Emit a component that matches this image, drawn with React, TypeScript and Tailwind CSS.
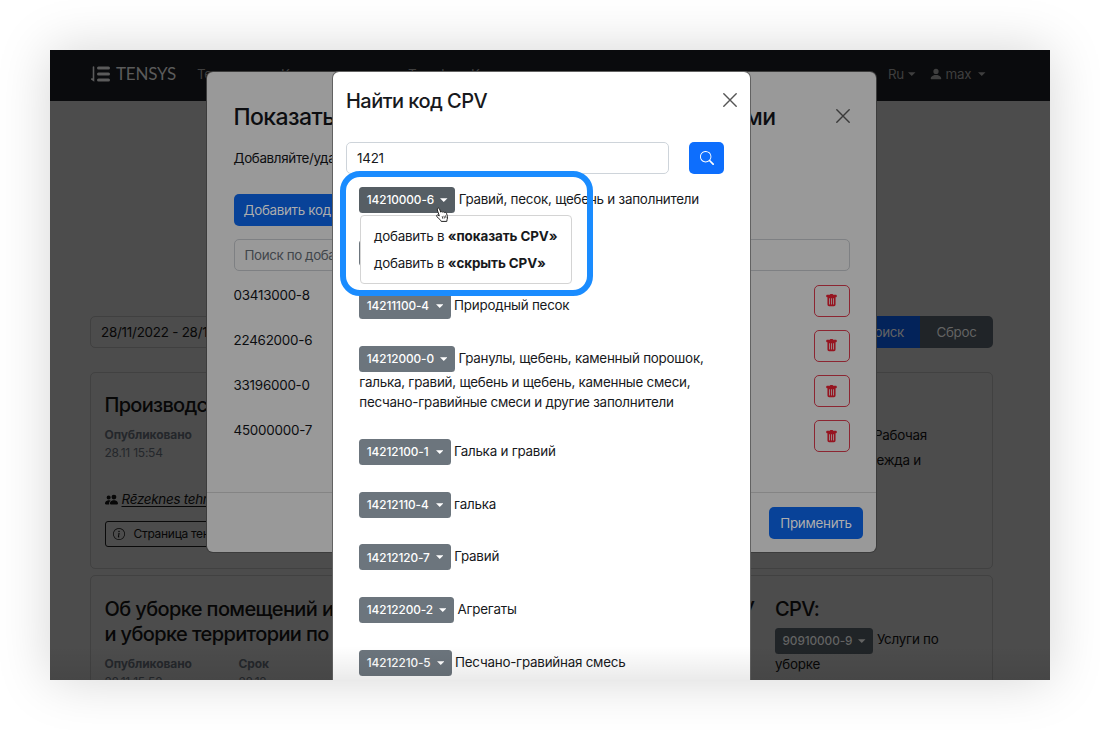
import React from "react";
import { BsInfoCircle, BsPeopleFill, BsPersonFill, BsSearch, BsTrashFill } from "react-icons/bs";

type CpvItem = { code: string; lines: string[]; active?: boolean };

const results: CpvItem[] = [
  { code: "14210000-6", lines: ["Гравий, песок, щебень и заполнители"], active: true },
  { code: "", lines: [""] },
  { code: "14211100-4", lines: ["Природный песок"] },
  {
    code: "14212000-0",
    lines: [
      "Гранулы, щебень, каменный порошок,",
      "галька, гравий, щебень и щебень, каменные смеси,",
      "песчано-гравийные смеси и другие заполнители",
    ],
  },
  { code: "14212100-1", lines: ["Галька и гравий"] },
  { code: "14212110-4", lines: ["галька"] },
  { code: "14212120-7", lines: ["Гравий"] },
  { code: "14212200-2", lines: ["Агрегаты"] },
  { code: "14212210-5", lines: ["Песчано-гравийная смесь"] },
];

const savedCodes = ["03413000-8", "22462000-6", "33196000-0", "45000000-7"];

function Caret({ className = "" }: { className?: string }) {
  return (
    <svg viewBox="0 0 8 4" className={`h-1 w-[7.5px] shrink-0 ${className}`} fill="currentColor">
      <path d="M0 0h8L4 4z" />
    </svg>
  );
}

function CloseIcon({ className = "" }: { className?: string }) {
  return (
    <svg viewBox="0 0 14 14" className={`size-3.5 shrink-0 ${className}`} fill="none" stroke="currentColor" strokeWidth="1.4" strokeLinecap="round">
      <path d="M.8.8l12.4 12.4M13.2.8L.8 13.2" />
    </svg>
  );
}

function CodeBadge({ code, className }: { code: string; className: string }) {
  return (
    <span className={`flex h-[26px] min-w-[91.3px] shrink-0 items-center justify-between gap-[6px] rounded-[3.5px] px-[7.5px] text-[11.8px] font-medium tracking-[-0.007em] ${className}`}>
      <span className="pt-[2px]">{code}</span>
      <Caret />
    </span>
  );
}

function Logo() {
  return (
    <div className="flex items-center text-[#5b5b5b]">
      <svg viewBox="0 0 19 16" className="h-4 w-[19px]" fill="none" stroke="currentColor" strokeLinecap="round">
        <path d="M2.5 1v13.2L.8 13" strokeWidth="1.6" />
        <path d="M7.5 2.1h10M7.5 8h10M7.5 13.9h10" strokeWidth="3" />
      </svg>
      <span className="ml-[6px] font-['Lato',sans-serif] text-[17px] leading-none">TENSYS</span>
    </div>
  );
}

function Navbar() {
  return (
    <header className="flex h-[51px] shrink-0 items-center bg-[#0a0b0d] pb-[4px] pl-[41px] text-[13.4px] tracking-[-0.017em] text-[#3f3f3f]">
      <Logo />
      <nav className="ml-[21px] flex pt-[2px]">
        <span className="w-[84px]">Тендеры</span>
        <span className="w-[127px]">Компании</span>
        <span className="w-[63px]">Тарифы</span>
        <span className="w-[417px]">Контакты</span>
      </nav>
      <span className="flex items-center gap-[4px] pt-[2px]">
        Ru <Caret />
      </span>
      <span className="ml-[14px] flex items-center pt-[2px]">
        <BsPersonFill className="-ml-px size-[14px]" />
        <span className="ml-[3px] mr-[7px]">max</span>
        <Caret />
      </span>
    </header>
  );
}

function DatePair({ label, value }: { label: string; value: string }) {
  return (
    <div className="w-[134px] text-[12px] leading-[18px] text-[#24272b]">
      <div className="font-bold tracking-[-0.008em]">{label}</div>
      <div>{value}</div>
    </div>
  );
}

function TenderPage() {
  return (
    <div className="flex h-[630px] flex-col bg-[#4c4c4c]">
      <Navbar />
      <main className="mx-10 w-[903px] pt-[215px] text-[13.4px] tracking-[-0.017em] text-[#070707]">
        <div className="flex h-8">
          <div className="flex-1 rounded-l-[5px] border border-[#404040] px-[10px] leading-[30px]">28/11/2022 - 28/12</div>
          <div className="w-[90px] bg-[#03235a] pr-4 text-right leading-8 tracking-[-0.025em] text-[#636363]">Поиск</div>
          <div className="w-[73px] rounded-r-[5px] bg-[#202428] text-center leading-8 tracking-[-0.025em] text-[#636363]">Сброс</div>
        </div>

        <section className="mt-[24px] flex h-[197px] justify-between rounded-[5px] border border-[#414141] pl-[13.5px] pr-[65px]">
          <div>
            <h2 className="mt-[20px] text-[20px] font-medium leading-[25px] tracking-[-0.035em]">Производство</h2>
            <div className="mt-[8px]">
              <DatePair label="Опубликовано" value="28.11 15:54" />
            </div>
            <div className="mt-[27px] flex h-5 items-center gap-[4px]">
              <BsPeopleFill className="size-[13px]" />
              <span className="italic tracking-[-0.02em] underline underline-offset-2">Rēzeknes tehn</span>
            </div>
            <div className="mt-[12px] flex h-[26px] w-[150px] items-center gap-[9px] rounded-[3px] border border-[#0a0a0a] pl-[7px] text-[12px] tracking-[-0.025em]">
              <BsInfoCircle className="size-[12px]" />
              Страница тен
            </div>
          </div>
          <div className="pt-[50px] text-right leading-[25px]">
            <div className="tracking-[-0.02em]">Рабочая</div>
            <div className="pr-[6px]">одежда и</div>
          </div>
        </section>

        <section className="mt-[6px] flex h-[140px] rounded-[5px] border border-[#414141] pl-[13.5px] pt-[21px]">
          <div className="w-[670.5px]">
            <h2 className="text-[20px] font-medium leading-[25px] tracking-[-0.031em]">
              <span className="flex w-[650px] justify-between">
                <span>Об уборке помещений и</span>
                <span>У</span>
              </span>
              и уборке территории по
            </h2>
            <div className="mt-[8px] flex">
              <DatePair label="Опубликовано" value="28.11 15:52" />
              <DatePair label="Срок" value="28.12" />
            </div>
          </div>
          <div>
            <h2 className="text-[20px] font-medium leading-[25px] tracking-[-0.03em]">CPV:</h2>
            <div className="mt-[6px] flex items-center gap-[3.5px]">
              <CodeBadge code="90910000-9" className="bg-[#202427] text-[#636363]" />
              <span className="pb-[3px]">Услуги по</span>
            </div>
            <div className="leading-5">уборке</div>
          </div>
        </section>
      </main>
    </div>
  );
}

function CodesDialog() {
  return (
    <div className="absolute left-[157px] top-[22px] flex h-[480px] w-[669px] flex-col rounded-[6px] bg-[#999999] text-[13.4px] tracking-[-0.017em] text-[#0c0d10] shadow-[0_0_0_1px_#3c3c3c]">
      <div className="flex items-center justify-between pl-[26.5px] pr-[26px] pt-[30px]">
        <h1 className="flex w-[542px] justify-between text-[23px] font-medium leading-[30px] tracking-[-0.025em]">
          <span>Показать</span>
          <span>ми</span>
        </h1>
        <CloseIcon className="-mt-[3px] text-[#3a3a3a]" />
      </div>
      <div className="px-[26.5px]">
        <p className="mt-[16px] leading-5 tracking-[-0.025em]">Добавляйте/удал</p>
        <div className="mt-[26px] h-8 w-[120px] rounded-[5px] bg-[#084298] pl-[10px] leading-8 tracking-[-0.023em] text-[#adadad]">Добавить код</div>
        <div className="mt-[13px] h-8 w-[616px] rounded-[5px] border border-[#7e8083] px-[10px] leading-[30px] tracking-[-0.03em] text-[#41464b]">Поиск по добавленн</div>
        <ul className="mt-[13.5px]">
          {savedCodes.map((code) => (
            <li key={code} className="flex h-[45.3px] w-[616px] justify-between">
              <span className="leading-[21.5px]">{code}</span>
              <span className="flex h-8 w-9 items-center justify-center rounded-[5px] border border-[#8c2632] text-[#961420]">
                <BsTrashFill className="size-[13px]" />
              </span>
            </li>
          ))}
        </ul>
      </div>
      <div className="mt-auto flex h-[60px] justify-end border-t border-[#848484] pr-[13px] pt-[14px]">
        <span className="h-8 w-[94px] rounded-[5px] bg-[#084298] text-center leading-8 tracking-[-0.02em] text-[#adadad]">Применить</span>
      </div>
    </div>
  );
}

function SearchDialog() {
  return (
    <div className="absolute left-[283px] top-[22px] h-[608px] w-[417px] overflow-hidden rounded-t-[6px] bg-white text-[13.4px] tracking-[-0.0175em] text-[#17191c]">
      <div className="flex items-center justify-between pl-[13px] pr-[13px] pt-[14px]">
        <h1 className="text-[20px] font-medium leading-[30px] tracking-[-0.027em]">Найти код CPV</h1>
        <CloseIcon className="-mt-[3px] text-[#555]" />
      </div>
      <div className="mt-[26px] flex gap-5 pl-[13px]">
        <div className="h-8 w-[323px] rounded-[5px] border border-[#ced4da] px-[10px] leading-[30px]">1421</div>
        <div className="flex h-8 w-[35px] items-center justify-center rounded-[5px] bg-[#0d6efd] text-white">
          <BsSearch className="size-[14px]" />
        </div>
      </div>
      <ul className="mt-[13.2px] pl-[26.3px]">
        {results.map((item) => (
          <li key={item.code} className="mb-[26.8px]">
            <div className="flex items-center gap-[3.5px]">
              <CodeBadge code={item.code} className={item.active ? "bg-[#565e64] text-white" : "bg-[#6c757d] text-white"} />
              <span className="whitespace-nowrap pb-[2px]">{item.lines[0]}</span>
            </div>
            {item.lines.slice(1).map((line) => (
              <div key={line} className="whitespace-nowrap leading-[20.2px]">{line}</div>
            ))}
          </li>
        ))}
      </ul>
    </div>
  );
}

function ActionMenu() {
  return (
    <div className="absolute left-[310px] top-[165px] h-[69px] w-[212px] rounded-[4px] border border-[#d4d4d4] bg-white pl-[13px] pt-[7px] text-[13.4px] leading-[27px] tracking-[-0.018em] text-[#17191c]">
      <div className="whitespace-nowrap">
        добавить в <b className="tracking-[-0.007em]">«показать CPV»</b>
      </div>
      <div className="whitespace-nowrap">
        добавить в <b className="tracking-[-0.007em]">«скрыть CPV»</b>
      </div>
    </div>
  );
}

function HandCursor() {
  return (
    <svg viewBox="0 0 14 16" className="absolute left-[385px] top-[157px] h-4 w-3.5" fill="#fff" stroke="#222" strokeWidth="1" strokeLinejoin="round">
      <path d="M2.4 1.6c.6-.9 1.8-.6 2.1.3l1.2 3.2c.5-.7 1.6-.6 1.9.1.6-.6 1.6-.4 1.9.4.8-.5 1.7-.1 2 .7l.9 3c.3 1.2 0 2.2-.3 3.2l-.3 1.9H6.2l-.5-1.1c-1-1.2-2.7-2.3-3.9-3.7-.8-1 .2-2 1.2-1.5l1.3.8L2.3 3z" />
      <path d="M7.2 9.2l.6 2.6M8.9 8.8l.6 2.6M10.5 8.4l.5 2.5" strokeWidth=".8" />
    </svg>
  );
}

export default function App() {
  return (
    <div className="h-[730px] w-[1100px] overflow-hidden bg-white p-[50px] font-['Inter',sans-serif]">
      <div className="relative h-[630px] w-[1000px] shadow-[0_0_50px_rgba(0,0,0,0.17)]">
        <div className="h-full overflow-hidden">
          <TenderPage />
        </div>
        <CodesDialog />
        <div className="absolute left-[282px] top-[21px] h-[609px] w-[419px] rounded-t-[7px] bg-[#626262]" />
        <SearchDialog />
        <ActionMenu />
        <div className="absolute left-[290px] top-[121px] h-[125px] w-[253px] rounded-[20px] border-[6px] border-[#1a8cff]" />
        <HandCursor />
        <div className="absolute inset-x-0 bottom-0 h-[34px] bg-gradient-to-b from-transparent to-black/8" />
      </div>
    </div>
  );
}
